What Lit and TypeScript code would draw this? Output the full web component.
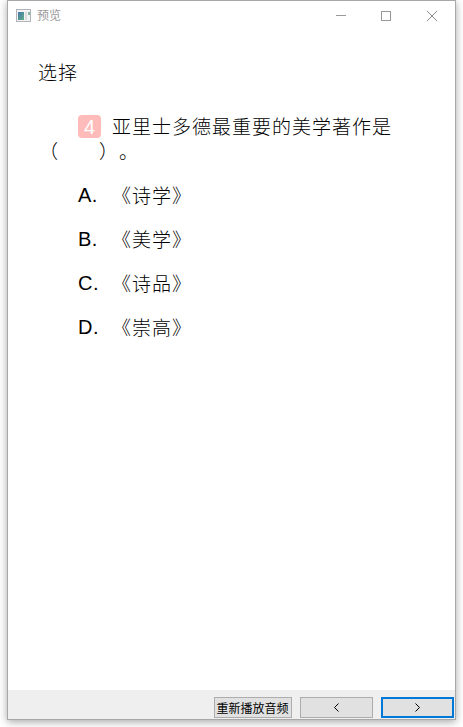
import { css, html, LitElement } from "lit";
import { customElement, property, state } from "lit/decorators.js";

interface Option {
  letter: string;
  text: string;
}

@customElement("title-bar")
export class TitleBar extends LitElement {
  static override styles = css`
    :host {
      display: flex;
      align-items: center;
      height: 29px;
      padding-left: 8px;
      color: #999;
      font: 12px/16px "Noto Sans CJK SC", sans-serif;
    }

    svg {
      display: block;
    }

    .title {
      flex: 1;
      margin-left: 6px;
      padding-bottom: 1px;
    }

    .control {
      display: flex;
      justify-content: center;
      width: 45px;
    }

    .control:last-child {
      width: 47px;
    }
  `;

  @property({ type: String })
  label = "";

  override render() {
    return html`
      <svg width="15" height="13" shape-rendering="crispEdges">
        <defs>
          <linearGradient id="screen" x2="1" y2="1">
            <stop offset="0" stop-color="#4576ad" />
            <stop offset="1" stop-color="#5fae83" />
          </linearGradient>
        </defs>
        <rect x=".5" y=".5" width="14" height="12" fill="#f3f3f3" stroke="#b0b4b8" />
        <rect x="2" y="3" width="6" height="8" fill="url(#screen)" />
        <rect x="9" y="3" width="2" height="8" fill="#dcdcdc" />
        <rect x="12" y="3" width="2" height="3" fill="#83b5a0" />
      </svg>
      <span class="title">${this.label}</span>
      <span class="control">
        <svg width="10" height="10"><path d="M0 4.5H10" stroke="#999" /></svg>
      </span>
      <span class="control">
        <svg width="10" height="10"><rect x=".5" y=".5" width="9" height="9" fill="none" stroke="#999" /></svg>
      </span>
      <span class="control">
        <svg width="10" height="10"><path d="M0 0L10 10M10 0L0 10" stroke="#8c8c8c" /></svg>
      </span>
    `;
  }
}

@customElement("app-root")
export class AppRoot extends LitElement {
  static override styles = css`
    :host {
      display: block;
      box-sizing: border-box;
      height: 727px;
      padding: 0 7px 7px;
      overflow: hidden;
      background: #fff;
    }

    .window {
      display: flex;
      flex-direction: column;
      box-sizing: border-box;
      height: 720px;
      border: 1px solid #a8a8a8;
      background: #fff;
      box-shadow: 0 2px 8px rgba(0, 0, 0, 0.35);
    }

    .content {
      flex: 1;
      padding: 29px 30px 0;
      color: #000;
      font: 300 19px/25px "Noto Sans CJK SC", sans-serif;
      letter-spacing: 1px;
      text-spacing-trim: space-all;
    }

    .question {
      display: flex;
      margin-top: 29px;
      padding-left: 40px;
    }

    .number {
      width: 23px;
      height: 23px;
      margin: 2px 11px 0 0;
      border-radius: 4px;
      background: #ffbaba;
      color: #fff;
      font: 20px/24px "Liberation Sans", sans-serif;
      letter-spacing: 0;
      text-align: center;
    }

    .blank {
      padding-left: 1px;
    }

    .option {
      display: flex;
      height: 25px;
      margin-top: 19px;
      padding-left: 40px;
    }

    .letter {
      width: 34px;
      font: 20px/26px "Liberation Sans", sans-serif;
      letter-spacing: 0.5px;
    }

    .footer {
      display: flex;
      justify-content: flex-end;
      gap: 8px;
      box-sizing: border-box;
      height: 29px;
      padding: 7px 1px 1px 0;
      background: #efefef;
    }

    button {
      display: flex;
      align-items: center;
      justify-content: center;
      box-sizing: border-box;
      width: 73px;
      height: 21px;
      padding: 0;
      border: 1px solid #adadad;
      border-radius: 0;
      background: #e1e1e1;
      color: #000;
      font: 12px/17px "Noto Sans CJK SC", sans-serif;
      white-space: nowrap;
    }

    .replay {
      width: 78px;
      padding: 0 1px 1px 0;
    }

    .primary {
      border: 2px solid #0078d7;
    }
  `;

  @state()
  private _options: Option[] = [
    { letter: "A", text: "《诗学》" },
    { letter: "B", text: "《美学》" },
    { letter: "C", text: "《诗品》" },
    { letter: "D", text: "《崇高》" },
  ];

  override render() {
    return html`
      <div class="window">
        <title-bar label="预览"></title-bar>
        <div class="content">
          <div>选择</div>
          <div class="question">
            <span class="number">4</span>
            <span>亚里士多德最重要的美学著作是</span>
          </div>
          <div class="blank">（　　）。</div>
          ${this._options.map(
            (option) => html`
              <div class="option">
                <span class="letter">${option.letter}.</span>
                <span>${option.text}</span>
              </div>
            `
          )}
        </div>
        <div class="footer">
          <button class="replay">重新播放音频</button>
          <button aria-label="上一题">
            <svg width="5" height="9"><path d="M4.5 .5L.5 4.5L4.5 8.5" fill="none" stroke="#000" /></svg>
          </button>
          <button class="primary" aria-label="下一题">
            <svg width="5" height="9"><path d="M.5 .5L4.5 4.5L.5 8.5" fill="none" stroke="#000" /></svg>
          </button>
        </div>
      </div>
    `;
  }
}
